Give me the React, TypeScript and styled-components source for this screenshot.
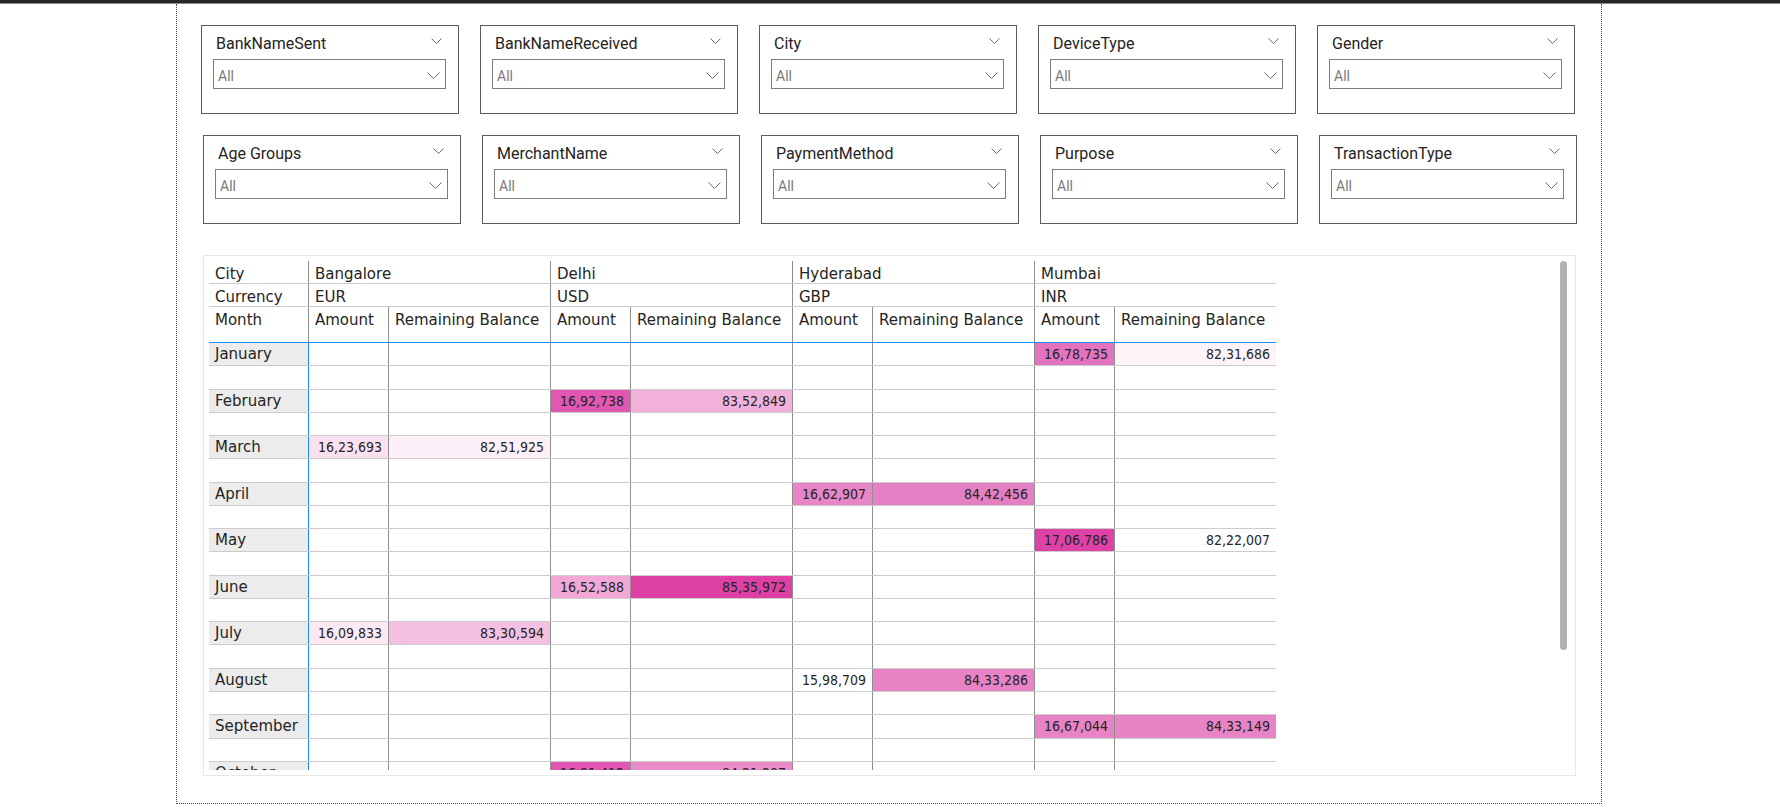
import React from 'react';
import styled, { createGlobalStyle } from 'styled-components';

const GlobalStyle = createGlobalStyle`
  html, body { margin: 0; padding: 0; background: #ffffff; }
  body { font-family: "DejaVu Sans", sans-serif; color: #252423; }
  * { box-sizing: border-box; }
`;

const TopBar = styled.div`
  height: 4px;
  background: linear-gradient(#272727 0, #272727 3px, #8c8c8c 3px, #8c8c8c 4px);
`;

const Frame = styled.div`
  margin-left: 176px;
  width: 1426px;
  height: 800px;
  border-left: 1px dotted #4a4a4a;
  border-right: 1px dotted #4a4a4a;
  border-bottom: 1px dotted #4a4a4a;
  padding-top: 21px;
  display: flex;
  flex-direction: column;
`;

const SlicerRow = styled.div<{ $indent: number; $gap: number }>`
  display: grid;
  grid-template-columns: repeat(5, 258px);
  column-gap: 21px;
  padding-left: ${(p) => p.$indent}px;
  margin-bottom: ${(p) => p.$gap}px;
`;

const SlicerBox = styled.div`
  height: 89px;
  border: 1px solid #5c5c5c;
  display: flex;
  flex-direction: column;
`;

const SlicerHeader = styled.div`
  height: 32px;
  padding: 2px 16px 0 14px;
  display: flex;
  align-items: center;
  justify-content: space-between;
`;

const SlicerTitle = styled.span`
  font-family: Roboto, "Liberation Sans", sans-serif;
  font-size: 16px;
  color: #252423;
  line-height: 18px;
  margin-top: 1px;
`;

const Dropdown = styled.div`
  margin: 1px 12px 0 11px;
  height: 30px;
  border: 1px solid #7c7c7c;
  display: flex;
  align-items: center;
  justify-content: space-between;
  padding: 3px 5px 0 4px;
`;

const DropdownValue = styled.span`
  font-family: Roboto, "Liberation Sans", sans-serif;
  font-size: 14px;
  color: #7a7a7a;
`;

const ChevronSvg = styled.svg`
  display: block;
  flex: none;
`;

const Chevron = ({ w, lift = 0 }: { w: number; lift?: number }) => (
  <ChevronSvg
    width={w}
    height={Math.round(w / 2) + 1}
    viewBox={`0 0 ${w} ${Math.round(w / 2) + 1}`}
    style={lift ? { marginTop: -lift } : undefined}
  >
    <polyline
      points={`0.5,0.5 ${w / 2},${w / 2} ${w - 0.5},0.5`}
      fill="none"
      stroke="#6a6a6a"
      strokeWidth="1"
    />
  </ChevronSvg>
);

const TablePanel = styled.div`
  position: relative;
  margin-left: 26px;
  margin-top: 10px;
  width: 1373px;
  height: 521px;
  border: 1px solid #e7e7e7;
  padding: 5px 5px 5px 5px;
`;

const Scrollbar = styled.div`
  position: absolute;
  top: 5px;
  right: 8px;
  width: 7px;
  height: 389px;
  border-radius: 4px;
  background: #b1b1b1;
`;

const Matrix = styled.div`
  width: 1067px;
  display: flex;
  flex-direction: column;
`;

const CITY_COLS = '99px repeat(4, 242px)';
const LEAF_COLS = '99px repeat(4, 80px 162px)';

const HeaderRow = styled.div<{ $cols: string; $h: number; $line: string }>`
  display: grid;
  grid-template-columns: ${(p) => p.$cols};
  height: ${(p) => p.$h}px;
  border-bottom: 1px solid ${(p) => p.$line};
`;

const HeaderCell = styled.div<{ $first?: boolean }>`
  font-size: 15px;
  line-height: 21px;
  padding: 3px 0 0 6px;
  white-space: nowrap;
  overflow: hidden;
  color: #252423;
  border-left: ${(p) => (p.$first ? 'none' : '1px solid #8e8e8e')};
`;

const BodyViewport = styled.div`
  height: 427px;
  overflow: hidden;
`;

const BodyRow = styled.div`
  display: grid;
  grid-template-columns: ${LEAF_COLS};
  height: 23.27px;
  border-bottom: 1px solid #cbcbcb;
`;

const MonthCell = styled.div<{ $filled: boolean }>`
  background: ${(p) => (p.$filled ? '#ececec' : 'transparent')};
  font-size: 15px;
  line-height: 22px;
  padding-left: 6px;
  white-space: nowrap;
  overflow: hidden;
`;

const ValueCell = styled.div<{ $bg: string; $blue?: boolean }>`
  background: ${(p) => p.$bg};
  border-left: 1px solid ${(p) => (p.$blue ? '#1a8cff' : '#8e8e8e')};
  font-family: "DejaVu Sans Condensed", "DejaVu Sans", sans-serif;
  font-stretch: condensed;
  font-size: 14px;
  line-height: 22px;
  text-align: right;
  padding-right: 6px;
  white-space: nowrap;
  overflow: hidden;
  color: #252423;
`;

const slicersTop = ['BankNameSent', 'BankNameReceived', 'City', 'DeviceType', 'Gender'];
const slicersBottom = ['Age Groups', 'MerchantName', 'PaymentMethod', 'Purpose', 'TransactionType'];

const cities = [
  { name: 'Bangalore', cur: 'EUR' },
  { name: 'Delhi', cur: 'USD' },
  { name: 'Hyderabad', cur: 'GBP' },
  { name: 'Mumbai', cur: 'INR' },
];

type Cell = [string, string] | null;
const W = '#ffffff';
const rows: { month: string; cells: Cell[] }[] = [
  { month: 'January', cells: [null, null, null, null, null, null, ['16,78,735', '#e372bf'], ['82,31,686', '#fdf4fa']] },
  { month: 'February', cells: [null, null, ['16,92,738', '#e157b1'], ['83,52,849', '#f2b1da'], null, null, null, null] },
  { month: 'March', cells: [['16,23,693', '#fbe1f0'], ['82,51,925', '#fdf0f8'], null, null, null, null, null, null] },
  { month: 'April', cells: [null, null, null, null, ['16,62,907', '#e885c6'], ['84,42,456', '#e57fc3'], null, null] },
  { month: 'May', cells: [null, null, null, null, null, null, ['17,06,786', '#df42a6'], ['82,22,007', W]] },
  { month: 'June', cells: [null, null, ['16,52,588', '#f1a8d6'], ['85,35,972', '#df40a4'], null, null, null, null] },
  { month: 'July', cells: [['16,09,833', '#fce9f4'], ['83,30,594', '#f3c0e1'], null, null, null, null, null, null] },
  { month: 'August', cells: [null, null, null, null, ['15,98,709', W], ['84,33,286', '#e883c5'], null, null] },
  { month: 'September', cells: [null, null, null, null, null, null, ['16,67,044', '#e883c5'], ['84,33,149', '#e883c5']] },
  { month: 'October', cells: [null, null, ['16,91,412', '#e157b1'], ['84,21,207', '#ea8ac9'], null, null, null, null] },
  { month: 'November', cells: [null, null, null, null, null, null, null, null] },
];

const Slicer = ({ title }: { title: string }) => (
  <SlicerBox>
    <SlicerHeader>
      <SlicerTitle>{title}</SlicerTitle>
      <Chevron w={11} lift={3} />
    </SlicerHeader>
    <Dropdown>
      <DropdownValue>All</DropdownValue>
      <Chevron w={13} />
    </Dropdown>
  </SlicerBox>
);

const emptyCells: Cell[] = [null, null, null, null, null, null, null, null];

const DataRow = ({ month, cells }: { month: string; cells: Cell[] }) => (
  <BodyRow>
    <MonthCell $filled={month !== ''}>{month}</MonthCell>
    {cells.map((c, i) => (
      <ValueCell key={i} $bg={c ? c[1] : 'transparent'} $blue={i === 0}>
        {c ? c[0] : ''}
      </ValueCell>
    ))}
  </BodyRow>
);

export default function App() {
  return (
    <>
      <GlobalStyle />
      <TopBar />
      <Frame>
        <SlicerRow $indent={24} $gap={21}>
          {slicersTop.map((s) => (
            <Slicer key={s} title={s} />
          ))}
        </SlicerRow>
        <SlicerRow $indent={26} $gap={21}>
          {slicersBottom.map((s) => (
            <Slicer key={s} title={s} />
          ))}
        </SlicerRow>
        <TablePanel>
          <Matrix>
            <HeaderRow $cols={CITY_COLS} $h={23} $line="#cbcbcb">
              <HeaderCell $first>City</HeaderCell>
              {cities.map((c) => (
                <HeaderCell key={c.name}>{c.name}</HeaderCell>
              ))}
            </HeaderRow>
            <HeaderRow $cols={CITY_COLS} $h={23} $line="#cbcbcb">
              <HeaderCell $first>Currency</HeaderCell>
              {cities.map((c) => (
                <HeaderCell key={c.cur}>{c.cur}</HeaderCell>
              ))}
            </HeaderRow>
            <HeaderRow $cols={LEAF_COLS} $h={36} $line="#1a8cff">
              <HeaderCell $first>Month</HeaderCell>
              {cities.map((c) => (
                <React.Fragment key={c.name}>
                  <HeaderCell>Amount</HeaderCell>
                  <HeaderCell>Remaining Balance</HeaderCell>
                </React.Fragment>
              ))}
            </HeaderRow>
            <BodyViewport>
              {rows.map((r) => (
                <React.Fragment key={r.month}>
                  <DataRow month={r.month} cells={r.cells} />
                  <DataRow month="" cells={emptyCells} />
                </React.Fragment>
              ))}
            </BodyViewport>
          </Matrix>
          <Scrollbar />
        </TablePanel>
      </Frame>
    </>
  );
}
